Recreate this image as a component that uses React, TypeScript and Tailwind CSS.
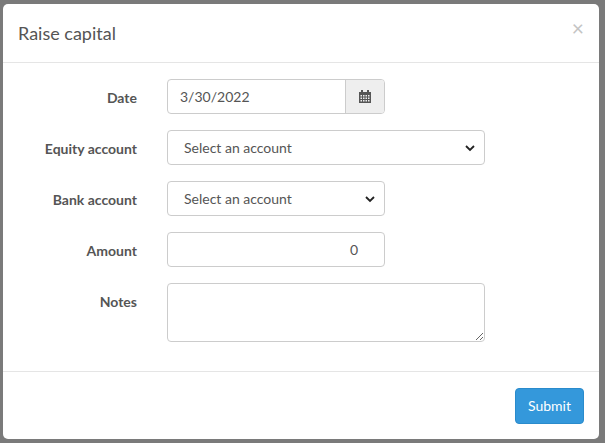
import * as React from 'react'

const Label = ({ children }: { children: React.ReactNode }) => (
    <div className="w-[134px] text-right font-bold text-[14px] text-[#555] pt-[8px]">{children}</div>
)

const Chevron = () => (
    <svg className="absolute right-[9px] top-[13px]" width="10" height="8" viewBox="0 0 10 8">
        <path d="M1 2l4 4 4-4" fill="none" stroke="#222" strokeWidth="1.8" />
    </svg>
)

const Select = ({ w }: { w: string }) => (
    <div className={`relative ${w} h-[35px] border border-[#ccc] rounded-[4px] bg-white text-[14px] text-[#555] pl-[16px] flex items-center`}>
        Select an account
        <Chevron />
    </div>
)

const App: React.FunctionComponent = () => {
    return (
        <div className="w-[605px] h-[443px] bg-[#7a7a7a] pt-[4px] pl-[3px]" style={{ fontFamily: 'Lato, "Noto Sans", sans-serif' }}>
            <div className="w-[596px] h-[435px] bg-white rounded-[5px] flex flex-col">
                <div className="h-[59px] border-b border-[#e5e5e5] flex items-center justify-between pl-[15px] pr-[15px]">
                    <div className="text-[18px] text-[#555]">Raise capital</div>
                    <div className="text-[#c4c4c4] text-[21px] -mt-[10px]">×</div>
                </div>
                <div className="flex-1 flex flex-col gap-[16px] pt-[16px]">
                    <div className="flex gap-[30px]">
                        <Label>Date</Label>
                        <div className="flex w-[218px] h-[35px] border border-[#ccc] rounded-[4px] overflow-hidden">
                            <div className="flex-1 text-[14px] text-[#555] pl-[12px] flex items-center">3/30/2022</div>
                            <div className="w-[39px] bg-[#eee] border-l border-[#ccc] flex items-center justify-center">
                                <svg width="12" height="13" viewBox="0 0 12 13">
                                    <rect x="0" y="2" width="12" height="11" fill="#555" />
                                    <rect x="2" y="0" width="2" height="3" fill="#555" />
                                    <rect x="8" y="0" width="2" height="3" fill="#555" />
                                    {[5, 7.5, 10].map(y => [1, 3.5, 6, 8.5].map(x => (
                                        <rect key={`${x}-${y}`} x={x + 0.5} y={y} width="1.5" height="1.5" fill="#eee" />
                                    )))}
                                </svg>
                            </div>
                        </div>
                    </div>
                    <div className="flex gap-[30px]">
                        <Label>Equity account</Label>
                        <Select w="w-[318px]" />
                    </div>
                    <div className="flex gap-[30px]">
                        <Label>Bank account</Label>
                        <Select w="w-[218px]" />
                    </div>
                    <div className="flex gap-[30px]">
                        <Label>Amount</Label>
                        <div className="w-[218px] h-[35px] border border-[#ccc] rounded-[4px] text-[14px] text-[#555] flex items-center justify-end pr-[26px]">0</div>
                    </div>
                    <div className="flex gap-[30px]">
                        <Label>Notes</Label>
                        <textarea className="w-[318px] h-[59px] border border-[#ccc] rounded-[4px] resize-y" />
                    </div>
                </div>
                <div className="h-[68px] border-t border-[#e5e5e5] flex items-center justify-end pr-[15px]">
                    <button className="w-[69px] h-[36px] bg-[#3498db] border border-[#2a8bcc] rounded-[4px] text-white text-[14px]">Submit</button>
                </div>
            </div>
        </div>
    )
}

export default App
